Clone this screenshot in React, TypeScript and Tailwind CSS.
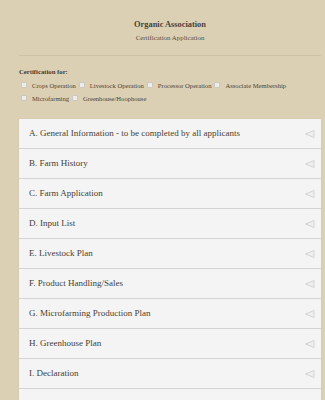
const sections = [
  "A. General Information - to be completed by all applicants",
  "B. Farm History",
  "C. Farm Application",
  "D. Input List",
  "E. Livestock Plan",
  "F. Product Handling/Sales",
  "G. Microfarming Production Plan",
  "H. Greenhouse Plan",
  "I. Declaration",
  "J. Pre-Operator Worksheet",
];

const options = [
  "Crops Operation",
  "Livestock Operation",
  "Processor Operation",
  "Associate Membership",
  "Microfarming",
  "Greenhouse/Hoophouse",
];

function Arrow() {
  return (
    <svg width="11" height="10" viewBox="0 0 11 10" className="shrink-0">
      <polygon points="1.5,5 10,1.5 10,8.5" fill="#eeeeee" stroke="#d0d0d0" strokeWidth="0.9" strokeLinejoin="round" />
    </svg>
  );
}

export default function App() {
  return (
    <div className="h-[400px] w-[325px] overflow-hidden bg-[#dbd0b4] pl-[19px] pr-[4px] font-['Liberation_Serif',serif] text-[#4d463c]">
      <header className="pt-5 text-center">
        <h1 className="text-[8.4px] font-bold leading-[10px] text-[#48423a]">Organic Association</h1>
        <p className="mt-[3px] text-[6.9px] leading-[9px] text-[#554e43]">Certification Application</p>
      </header>
      <div className="mt-[13px] h-px bg-[#cbc1a6]" />

      <p className="mt-[12px] text-[6.7px] font-bold leading-[8px] text-[#3f3a32]">Certification for:</p>
      <div className="mt-[2.5px] flex flex-wrap items-center">
        {options.map((o) => (
          <label key={o} className="flex h-[13px] items-center pl-[2px] pr-[1px]">
            <span className="h-[6px] w-[6px] rounded-[1px] border border-[#cbc8c0] bg-[#ececec]" />
            <span className="ml-[5px] text-[6.6px] leading-[13px] text-[#4a4339]">{o}</span>
          </label>
        ))}
      </div>

      <div className="mt-[14.5px] bg-[#f4f4f4] shadow-[0_0_1px_rgba(0,0,0,0.12)]">
        {sections.map((s) => (
          <div key={s} className="flex h-[30px] items-center justify-between border-b border-[#d4d4d4] pl-[10px] pr-[6px]">
            <span className="text-[9px] leading-none text-[#463f35]">{s}</span>
            <Arrow />
          </div>
        ))}
      </div>
    </div>
  );
}
